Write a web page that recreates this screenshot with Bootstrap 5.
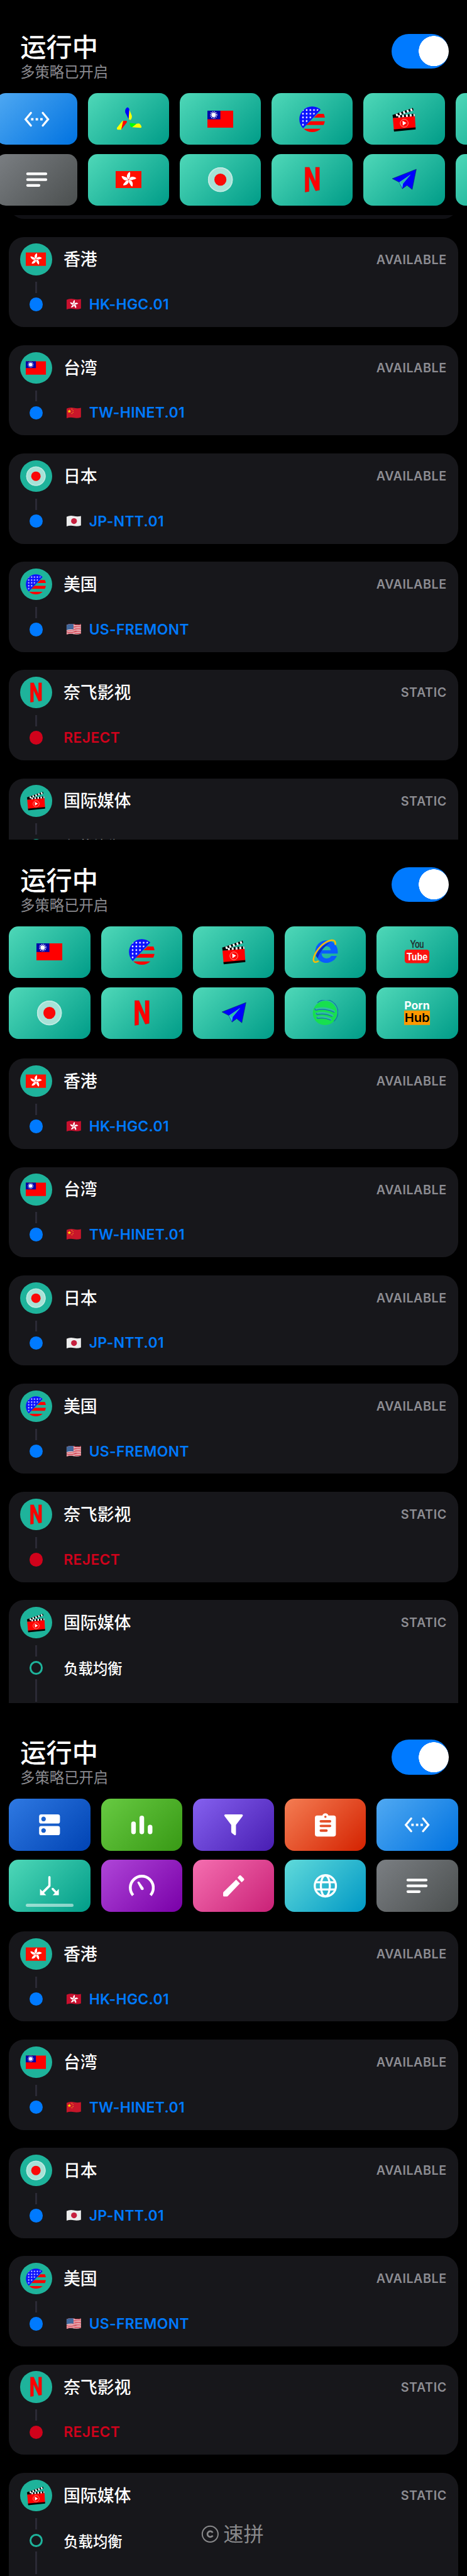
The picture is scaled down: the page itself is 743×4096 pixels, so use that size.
<!DOCTYPE html>
<html lang="zh-CN" data-bs-theme="dark">
<head>
<meta charset="utf-8">
<meta name="viewport" content="width=device-width, initial-scale=1">
<title>运行中</title>
<link href="https://cdn.jsdelivr.net/npm/bootstrap@5.3.0/dist/css/bootstrap.min.css" rel="stylesheet">
<style>
:root{--u:.8969px}
body{background:#000;color:#fff;font-family:Inter,"Noto Sans CJK SC",sans-serif;overflow-x:hidden}
.sprites{position:absolute}
.screen{overflow:hidden;position:relative}
.screen-a{height:calc(1488*var(--u));padding-top:calc(60*var(--u))}
.screen-b{height:calc(1531*var(--u));padding-top:calc(49*var(--u))}
.screen-c{height:calc(1548*var(--u));padding-top:calc(65*var(--u))}
.top-bar{height:calc(105*var(--u));padding:0 calc(32*var(--u)) 0 calc(36*var(--u))}
.top-title{font-size:calc(46*var(--u));line-height:calc(48*var(--u));font-weight:500}
.top-sub{font-size:calc(26*var(--u));line-height:calc(41*var(--u));color:#8a8a8f}
.power.form-check-input{width:calc(102*var(--u));height:calc(62*var(--u));margin:0;border:0;background-color:#007aff;border-radius:calc(31*var(--u));background-image:radial-gradient(circle closest-side,#fff 98%,transparent 100%);background-size:calc(54*var(--u)) calc(54*var(--u));background-position:right calc(4*var(--u)) center}
.tiles{display:grid;grid-template-columns:repeat(5,1fr);gap:calc(16*var(--u)) calc(19*var(--u));padding:0 calc(16*var(--u))}
.tiles-scrolled{grid-template-columns:repeat(6,calc(144*var(--u)));margin-left:calc(-23*var(--u));width:max-content}
.tile{height:calc(92*var(--u));border-radius:calc(17*var(--u));background:linear-gradient(135deg,var(--a,#4fd8b8),var(--b,#009c88));position:relative}
.tile svg{width:calc(46*var(--u));height:calc(46*var(--u))}
.t-code{--a:#50a9f2;--b:#0072e0}.t-gray{--a:#7b7f83;--b:#4b4f4f}.t-server{--a:#2f79e2;--b:#0043b3}.t-green{--a:#67ca42;--b:#389915}
.t-violet{--a:#8561ef;--b:#481db2}.t-red{--a:#f47d53;--b:#d42200}.t-purple{--a:#af46d8;--b:#7900a8}.t-pink{--a:#f56fb0;--b:#c92177}.t-cyan{--a:#60dada;--b:#0098c5}
.handle{position:absolute;left:calc(30*var(--u));right:calc(30*var(--u));bottom:calc(8*var(--u));height:calc(6*var(--u));border-radius:3px;background:rgba(255,255,255,.52)}
.peek{height:calc(7*var(--u));margin:calc(16*var(--u)) calc(16*var(--u)) 0;overflow:hidden;display:flex;align-items:flex-end}
.peek span{flex:1;height:calc(60*var(--u));border-radius:calc(27*var(--u));background:#101014}
.policies{display:grid;gap:calc(32*var(--u));padding:0 calc(16*var(--u));margin-top:calc(35*var(--u))}
.peek + .policies{margin-top:calc(32*var(--u))}
.policy{height:calc(160*var(--u));border-radius:calc(27*var(--u));background:#17171b;border:0;padding:calc(12*var(--u)) calc(20*var(--u)) 0 calc(20*var(--u));position:relative}
.policy-tall{height:calc(300*var(--u))}
.policy-head{height:calc(56*var(--u))}
.disc{width:calc(56*var(--u));height:calc(56*var(--u));background:#1eb39b}
.disc svg{width:calc(36*var(--u));height:calc(36*var(--u))}
.policy-name{font-size:calc(30*var(--u));line-height:1;margin-left:calc(20.5*var(--u));padding-top:calc(1*var(--u));font-weight:500}
.kind{font-size:calc(22*var(--u));font-weight:600;color:#8d8d93;letter-spacing:calc(.6*var(--u));padding-top:calc(2*var(--u))}
.stem{width:calc(4*var(--u));height:calc(20*var(--u));background:#2b2a35;margin:calc(12*var(--u)) 0 calc(8*var(--u)) calc(26*var(--u))}
.stem-long{height:calc(40*var(--u));margin-top:calc(8*var(--u))}
.node{height:calc(24*var(--u));padding-left:calc(16*var(--u));color:#007aff}
.dot{width:calc(24*var(--u));height:calc(24*var(--u));background:currentColor;margin-right:calc(37*var(--u))}
.ring{background:none;border:calc(4*var(--u)) solid #1eb39b}
.node-name{font-size:calc(25.5*var(--u));line-height:1;font-weight:600;letter-spacing:calc(.4*var(--u));padding-top:calc(1*var(--u))}
.node-zh{color:#fff;font-size:calc(26*var(--u));letter-spacing:0;font-weight:500;padding-top:calc(4*var(--u))}
.rejected{color:#d0021b}
.wave{width:calc(32*var(--u));height:calc(24*var(--u));margin:0 calc(11*var(--u)) 0 calc(2*var(--u))}
.watermark{position:absolute;left:calc(357*var(--u));top:calc(1447*var(--u));color:#88888a}
.watermark svg{width:calc(32*var(--u));height:calc(32*var(--u));margin-right:calc(7*var(--u))}
.watermark span{font-size:calc(36*var(--u));line-height:calc(54*var(--u))}
</style>
</head>
<body>
<svg width="0" height="0" class="sprites" aria-hidden="true">
<defs>
<clipPath id="cu"><circle cx="23" cy="23" r="22.700"/></clipPath>
<clipPath id="cw"><path d="M2 4.500Q9 1 16 3t14 0v18q-7 2.500-14 1t-14 1z"/></clipPath>
<pattern id="st" width="6.500" height="6.500" patternUnits="userSpaceOnUse" x="3.500" y="3.500"><circle cx="3.250" cy="3.250" r="1.500" fill="#fff"/></pattern>
<symbol id="i-code" viewBox="0 0 46 46"><path d="M12.5 11.7 3 23l9.5 11.3M33.5 11.7 43 23l-9.5 11.3" fill="none" stroke="#fff" stroke-width="3.6" stroke-linecap="round"/><path d="M12.7 21H17v4.2h-4.3zM20.9 21h4.2v4.2h-4.2zM29 21h4.3v4.2H29z" fill="#fff"/></symbol>
<symbol id="i-menu" viewBox="0 0 46 46"><path d="M6.5 12.7h32.6M6.5 23h32.6M6.5 33.3h20.4" stroke="#fff" stroke-width="4.6" stroke-linecap="round"/></symbol>
<symbol id="i-blades" viewBox="0 0 46 46"><path fill="#ff0" d="M24 5.5l4.600 11q.8 5-1.800 7.500h-2.200l-1.400-2zM12 26h1.600L10 41.500H3.500q-2-.6-1-3.700zM37 31l4.500-.5q3 1.500 4.500 5.500 .5 2.300-2 2.300L29 37z"/><path fill="#00f" d="M20.500 2q-4.600 3-3.500 9l6 11.500L24.200 6q-.5-4-3.700-4z"/><path fill="#f00" d="M13.300 26l5.500-.4q2 .8.7 3.400L10 41.300z"/><path fill="#0f0" d="M24.500 29.500L37 31l-8 6-2.500-1z"/></symbol>
<symbol id="i-tw" viewBox="0 0 46 46"><path fill="#f00" d="M0 7.700h46V38H0z"/><path fill="#0000a8" d="M0 7.700h23V23H0z"/><circle cx="11" cy="15.400" r="5.400" fill="none" stroke="#fff" stroke-width="2.600" stroke-dasharray="1.100 1.727"/><circle cx="11" cy="15.400" r="3.900" fill="#fff"/></symbol>
<symbol id="i-hk" viewBox="0 0 46 46"><path fill="#ff0f00" d="M0 7.700h46V38H0z"/><g id="petals"><path id="petal" fill="#fff" d="M23 22.500c-4-2.500-4.500-9 1.800-13.300 2 3 .4 5 .8 7.300.3 2.600-1.600 3.200-2.600 6z"/><use href="#petal" transform="rotate(72 23 23)"/><use href="#petal" transform="rotate(144 23 23)"/><use href="#petal" transform="rotate(216 23 23)"/><use href="#petal" transform="rotate(288 23 23)"/></g></symbol>
<symbol id="i-jp" viewBox="0 0 46 46"><circle cx="23" cy="23" r="22" fill="#a6e2d7"/><circle cx="23" cy="23" r="21" fill="none" stroke="#c0ebe3" stroke-width="2"/><circle cx="23" cy="23" r="10.700" fill="#fa0807"/></symbol>
<symbol id="i-us" viewBox="0 0 46 46"><g clip-path="url(#cu)"><path fill="#f00" d="M33 13.300h13V20H26zM20 26.500h26v6.700H12zM6 40h40v6H6z"/><path fill="#0b10ff" d="M0 0h44L6.500 39.500 0 46z"/><path fill="url(#st)" d="M3 3h34L7 37l-4-2z"/></g></symbol>
<symbol id="i-clap" viewBox="0 0 46 46"><path fill="#000" d="M2.200 15.500L39 2.700l1 4.500L6 18.300zM3 16.500l38.700-3.300.6 4.600L3.500 21z"/><path d="M9 16L39.500 5M13 18.200l29-2.700" stroke="#fff" stroke-width="4.500" stroke-dasharray="3.400 3.400"/><path fill="#f00" d="M3.300 21l39.200-3.400 1.200 20.800L5.200 42z"/><path fill="#000" d="M5 41l38.700-3.600.2 3.700L5.500 45z"/><circle cx="23.500" cy="30" r="7" fill="none" stroke="#ffb0a0" stroke-width="1"/><path fill="#fff" d="M20.500 25.600l7 4-6.500 4.600z"/></symbol>
<symbol id="i-n" viewBox="0 0 46 46"><path fill="#f00" stroke="#b02018" stroke-width=".5" d="M10.500 1H18l11 26V1h7v40.500l-6.800 1.300L17.500 17v27l-7 1.200z"/></symbol>
<symbol id="i-tg" viewBox="0 0 46 46"><path fill="#00f" stroke="#0b3a6a" stroke-width=".8" d="M2.400 21.300L45 4.500l-7.300 36-9.200-7.300-8.300 6-5.500-11.500z"/><path d="M14.700 27.700L35 14 21.500 30l-1.300 8.500z" fill="#30bfe0"/><path d="M16 28L35 14 19.800 31z" fill="#2fbda3"/></symbol>
<symbol id="i-ie" viewBox="0 0 46 46"><path fill="#0a5cff" fill-rule="evenodd" d="M45 26H16.200q1.300 8.500 9.300 8.500 5.300 0 8-4.300h10A20 20 0 1 1 45 24zM16.500 20.200h16.300q-1-7.500-8.200-7.500t-8.100 7.500z"/><path fill="#0b2fc0" d="M32 5.500Q13 12 6 30l3.500 4Q14 19 32 5.500z"/><path fill="none" stroke="#fbbc05" stroke-width="2.800" d="M40.500 10.500Q42 1.500 34 2.200 19 4.500 7 23-1 37 3.500 40.500q3 1.500 7.500-1.500"/></symbol>
<symbol id="i-yt" viewBox="0 0 46 46"><rect x="1" y="19" width="43.700" height="24" rx="5" fill="#fb1410"/><text x="11" y="16" font-family="Liberation Sans" font-size="18.500" textLength="24" lengthAdjust="spacingAndGlyphs" fill="#20292b" stroke="#20292b" stroke-width=".6">You</text><text x="4.500" y="37.500" font-family="Liberation Sans" font-weight="700" font-size="18.500" textLength="37" lengthAdjust="spacingAndGlyphs" fill="#fff">Tube</text></symbol>
<symbol id="i-sp" viewBox="0 0 46 46"><circle cx="22.300" cy="23.200" r="21.500" fill="#17df4f"/><path d="M9 5A21.800 21.800 0 0 1 38 38" fill="none" stroke="#1470a8" stroke-width="1.300"/><g fill="none"><path d="M5.500 16.500q17-5 33 3.500M7 24q15-4 28.500 3.500M8.500 31q12-3 24 3.500" stroke="#2fbf9e" stroke-width="3.600" stroke-linecap="round"/><path d="M4.500 15q0 3.500 3 3 16-3.500 31.500 4M7 23q0 3 3 2.600 13-2.600 25.500 4M8 30.500q0 2.500 3 2.200 11-2 22 3.300" stroke="#1767b4" stroke-width="1.400"/></g></symbol>
<symbol id="i-ph" viewBox="0 0 46 46"><path fill="#f90" d="M0 18.700h46v25.600H0z"/><text x=".3" y="16.200" font-family="Inter" font-weight="700" font-size="20" textLength="45" lengthAdjust="spacingAndGlyphs" fill="#fff">Porn</text><text x=".8" y="39" font-family="Inter" font-weight="600" font-size="21" textLength="44.500" lengthAdjust="spacingAndGlyphs" fill="#000">Hub</text></symbol>
<symbol id="i-server" viewBox="0 0 46 46"><path fill="#fff" fill-rule="evenodd" d="M8.500 4.400h29.400q3.800 0 3.800 3.800v8.700q0 3.800-3.800 3.800H8.500q-3.800 0-3.800-3.800V8.200q0-3.800 3.800-3.800zM12.600 8.500a4.100 4.100 0 1 0 .01 0zM8.500 25h29.400q3.800 0 3.800 3.800v8.700q0 3.800-3.800 3.800H8.500q-3.800 0-3.800-3.800v-8.700Q4.700 25 8.500 25zM12.600 29a4.100 4.100 0 1 0 .01 0z"/></symbol>
<symbol id="i-bars" viewBox="0 0 46 46"><path d="M8.300 21v14.500M23 10.700v24.800M37.700 27v8.500" stroke="#fff" stroke-width="8.200" stroke-linecap="round"/></symbol>
<symbol id="i-funnel" viewBox="0 0 46 46"><path fill="#fff" d="M8.300 4.400h29.400q2.800.6 1.300 3.200L27.200 23v17q-.4 2-2.400 1.200l-4.800-3.700q-1.200-1-1.200-2.500V23L7 7.600q-1.500-2.600 1.300-3.200z"/></symbol>
<symbol id="i-clip" viewBox="0 0 46 46"><path fill="#fff" fill-rule="evenodd" d="M8.500 6.500h9.300a5.500 5.500 0 0 1 10.600 0h9.300q4 0 4 4v29.200q0 4-4 4H8.500q-4 0-4-4V10.500q0-4 4-4zM23.100 6.700a2 2 0 1 0 .01 0zM15 14.600a2.100 2.100 0 0 0 0 4.300h16.300a2.100 2.100 0 0 0 0-4.300zM15 22.800a2.100 2.100 0 0 0 0 4.300h16.300a2.100 2.100 0 0 0 0-4.300zM15 31a2.100 2.100 0 0 0 0 4.300h10a2.100 2.100 0 0 0 0-4.300z"/></symbol>
<symbol id="i-split" viewBox="0 0 46 46"><path d="M23 7.500V23l-12 12M28.800 28.500L35 35" fill="none" stroke="#fff" stroke-width="4" stroke-linecap="round" stroke-linejoin="round"/><path fill="#fff" d="M6.300 28.500v11h11zM39.700 28.500v11h-11z"/></symbol>
<symbol id="i-gauge" viewBox="0 0 46 46"><path d="M7.500 39.500a20.400 20.400 0 1 1 31 0" fill="none" stroke="#fff" stroke-width="5"/><path fill="#fff" d="M15 17q1-2.500 3.300-1.300L26 26.500q1.300 4-2.300 4-1.500 0-2.500-1.500z"/></symbol>
<symbol id="i-pencil" viewBox="0 0 46 46"><path fill="#fff" d="M27.500 12l6.700 6.700L12.600 41.300q-.6.600-1.600.6H6q-1.500 0-1.500-1.500v-4.700q0-1.200.8-2zM33 5q1.600-1.600 3.200 0l5 5q1.600 1.600 0 3.200l-3.800 3.400-7.500-8z"/></symbol>
<symbol id="i-globe" viewBox="0 0 46 46"><g fill="none" stroke="#fff" stroke-width="3.700"><circle cx="23" cy="23" r="18.800"/><ellipse cx="23" cy="23" rx="8" ry="18.500"/><path d="M5 16.500h36M5 29.500h36"/></g></symbol>
<symbol id="w-hk" viewBox="0 0 32 26"><g clip-path="url(#cw)"><path fill="#c8102e" d="M0 0h32v26H0z"/><use href="#petals" transform="translate(2.600 -.7) scale(.6)"/></g></symbol>
<symbol id="w-cn" viewBox="0 0 32 26"><g clip-path="url(#cw)"><path fill="#c8162a" d="M0 0h32v26H0z"/><path fill="#ffd800" d="M7.500 6l1 2.600h2.700L9 10.200l.8 2.700-2.300-1.600-2.300 1.600.8-2.700-2.200-1.600h2.700z"/><g fill="#ffa020"><circle cx="12.500" cy="5.500" r=".9"/><circle cx="14.500" cy="8" r=".9"/><circle cx="14.500" cy="11.500" r=".9"/><circle cx="12.500" cy="14" r=".9"/></g></g></symbol>
<symbol id="w-jp" viewBox="0 0 32 26"><g clip-path="url(#cw)"><path fill="#ececec" d="M0 0h32v26H0z"/><circle cx="16.500" cy="12.700" r="5.600" fill="#c6203e"/></g></symbol>
<symbol id="w-us" viewBox="0 0 32 26"><g clip-path="url(#cw)"><path fill="#f1e9ea" d="M0 0h32v26H0z"/><g fill="none" stroke="#d02f40" stroke-width="1.600"><path d="M0 4.500Q9 1.500 16 3.500t16 0M0 7.700q9-3 16-1t16 0M0 10.900q9-3 16-1t16 0M0 14.100q9-3 16-1t16 0M0 17.300q9-3 16-1t16 0M0 20.500q9-3 16-1t16 0M0 23.500q9-3 16-1t16 0"/></g><path fill="#41689c" d="M0 0h15.500v13Q9 11.500 0 15z"/></g></symbol>
</defs>
</svg>

<main id="app"></main>

<script>
const icon = (id, cls = '') => `<svg class="${cls}" aria-hidden="true"><use href="#${id}"/></svg>`;

const header = `
<header class="top-bar d-flex justify-content-between align-items-start">
  <div><h1 class="top-title m-0">运行中</h1><p class="top-sub m-0">多策略已开启</p></div>
  <div class="form-switch p-0"><input class="form-check-input power shadow-none" type="checkbox" role="switch" checked aria-label="运行中"></div>
</header>`;

const tile = ([id, tone = '', active]) =>
  `<div class="tile ${tone} d-flex align-items-center justify-content-center">${id ? icon('i-' + id) : ''}${active ? '<i class="handle"></i>' : ''}</div>`;

const policies = [
  ['香港', 'AVAILABLE', 'hk', 'hk', 'HK-HGC.01'],
  ['台湾', 'AVAILABLE', 'tw', 'cn', 'TW-HINET.01'],
  ['日本', 'AVAILABLE', 'jp', 'jp', 'JP-NTT.01'],
  ['美国', 'AVAILABLE', 'us', 'us', 'US-FREMONT'],
  ['奈飞影视', 'STATIC', 'n', '', 'REJECT'],
  ['国际媒体', 'STATIC', 'clap', '', '负载均衡']
];

const policy = ([name, kind, pic, flag, node]) => {
  const last = pic === 'clap';
  return `
<article class="policy card ${last ? 'policy-tall' : ''}">
  <div class="policy-head d-flex align-items-center">
    <span class="disc rounded-circle d-flex align-items-center justify-content-center">${icon('i-' + pic)}</span>
    <h2 class="policy-name mb-0">${name}</h2>
    <span class="kind ms-auto">${kind}</span>
  </div>
  <div class="stem"></div>
  <div class="node d-flex align-items-center ${node === 'REJECT' ? 'rejected' : ''}">
    <span class="dot rounded-circle ${last ? 'ring' : ''}"></span>${flag ? icon('w-' + flag, 'wave') : ''}
    <span class="node-name ${last ? 'node-zh' : ''}">${node}</span>
  </div>${last ? '<div class="stem stem-long"></div>' : ''}
</article>`;
};

const screen = (cls, tiles, extra = '', tail = '') => `
<section class="screen ${cls}">${header}
  <nav class="tiles ${cls === 'screen-a' ? 'tiles-scrolled' : ''}">${tiles.map(tile).join('')}</nav>${extra}
  <div class="policies">${policies.map(policy).join('')}</div>${tail}
</section>`;

document.getElementById('app').innerHTML =
  screen('screen-a', [['code', 't-code'], ['blades'], ['tw'], ['us'], ['clap'], [''], ['menu', 't-gray'], ['hk'], ['jp'], ['n'], ['tg'], ['']],
    '<div class="peek"><span></span></div>') +
  screen('screen-b', [['tw'], ['us'], ['clap'], ['ie'], ['yt'], ['jp'], ['n'], ['tg'], ['sp'], ['ph']]) +
  screen('screen-c', [['server', 't-server'], ['bars', 't-green'], ['funnel', 't-violet'], ['clip', 't-red'], ['code', 't-code'],
    ['split', '', true], ['gauge', 't-purple'], ['pencil', 't-pink'], ['globe', 't-cyan'], ['menu', 't-gray']], '',
    `<div class="watermark d-flex align-items-center"><svg viewBox="0 0 32 32" aria-hidden="true"><g fill="none" stroke="currentColor"><circle cx="16" cy="16" r="14" stroke-width="2.200"/><path d="M20.500 13.500a5 5 0 1 0 0 5" stroke-width="3"/></g></svg><span>速拼</span></div>`);
</script>
<script src="https://cdn.jsdelivr.net/npm/bootstrap@5.3.0/dist/js/bootstrap.bundle.min.js"></script>
</body>
</html>
